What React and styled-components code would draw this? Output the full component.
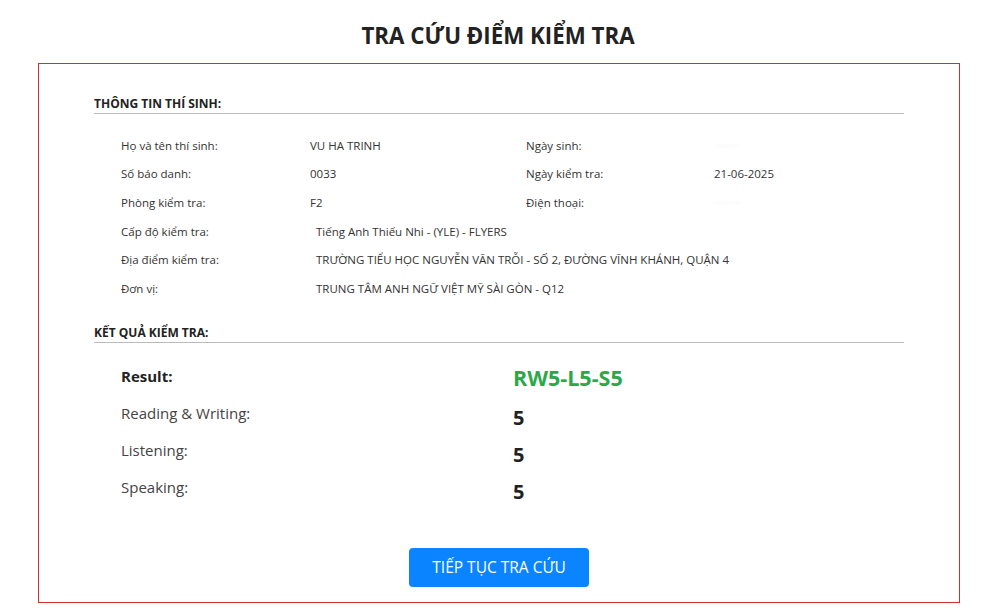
import styled, { createGlobalStyle } from "styled-components";

const GlobalStyle = createGlobalStyle`
  body {
    margin: 0;
    background: #fff;
    font-family: "Open Sans", "Noto Sans", sans-serif;
    color: #333;
  }
`;

const Page = styled.div`
  width: 982px;
  padding-top: 20px;
`;

const Title = styled.h1`
  margin: 0 0 12px;
  padding-left: 14px;
  text-align: center;
  font-size: 22.3px;
  font-weight: 700;
  color: #222;
  line-height: 31px;
`;

const Box = styled.div`
  margin: 0 22px 0 38px;
  border: 1px solid #d32f2f;
  padding: 31px 55px 15px 55px;
`;

const SectionHead = styled.div`
  font-size: 12px;
  font-weight: 700;
  color: #222;
  padding-bottom: 1px;
  border-bottom: 1px solid #bbb;
  margin-top: ${(p) => p.$top || 0}px;
`;

const InfoGrid = styled.div`
  display: grid;
  grid-template-columns: 189px 216px 188px 1fr;
  grid-auto-rows: 28.6px;
  padding: 17px 0 0 27px;
  font-size: 11.5px;
  color: #333;
  align-items: center;
`;

const Wide = styled.div`
  grid-column: 2 / span 3;
  padding-left: 6px;
`;

const Blur = styled.div`
  color: #eee;
  font-size: 10px;
  filter: blur(1px);
`;

const ResultGrid = styled.div`
  display: grid;
  grid-template-columns: 392px 1fr;
  grid-auto-rows: 37px;
  padding: 23px 0 0 27px;
`;

const RLabel = styled.div`
  font-size: 15px;
  font-weight: ${(p) => (p.$bold ? 700 : 400)};
  color: ${(p) => (p.$bold ? "#222" : "#444")};
`;

const RValue = styled.div`
  font-size: ${(p) => p.$size || 20}px;
  font-weight: 700;
  line-height: 27px;
  color: ${(p) => p.$color || "#222"};
  margin-top: ${(p) => p.$pt || 0}px;
`;

const ButtonRow = styled.div`
  display: flex;
  justify-content: center;
  padding-top: 34px;
`;

const Button = styled.button`
  width: 180px;
  height: 39px;
  border: none;
  border-radius: 4px;
  background: #0a84ff;
  color: #fff;
  font-family: inherit;
  font-size: 15.5px;
  cursor: pointer;
`;

const info = [
  ["Họ và tên thí sinh:", "VU HA TRINH", "Ngày sinh:", null],
  ["Số báo danh:", "0033", "Ngày kiểm tra:", "21-06-2025"],
  ["Phòng kiểm tra:", "F2", "Điện thoại:", null],
];

const wide = [
  ["Cấp độ kiểm tra:", "Tiếng Anh Thiếu Nhi - (YLE) - FLYERS"],
  ["Địa điểm kiểm tra:", "TRƯỜNG TIỂU HỌC NGUYỄN VĂN TRỖI - SỐ 2, ĐƯỜNG VĨNH KHÁNH, QUẬN 4"],
  ["Đơn vị:", "TRUNG TÂM ANH NGỮ VIỆT MỸ SÀI GÒN - Q12"],
];

const scores = [
  ["Reading & Writing:", "5"],
  ["Listening:", "5"],
  ["Speaking:", "5"],
];

export default function App() {
  return (
    <Page>
      <GlobalStyle />
      <Title>TRA CỨU ĐIỂM KIỂM TRA</Title>
      <Box>
        <SectionHead>THÔNG TIN THÍ SINH:</SectionHead>
        <InfoGrid>
          {info.map(([l1, v1, l2, v2]) => [
            <div key={l1}>{l1}</div>,
            <div key={l1 + "v"}>{v1}</div>,
            <div key={l2}>{l2}</div>,
            v2 ? <div key={l2 + "v"}>{v2}</div> : <Blur key={l2 + "v"}>··········</Blur>,
          ])}
          {wide.map(([l, v]) => [
            <div key={l}>{l}</div>,
            <Wide key={l + "v"}>{v}</Wide>,
          ])}
        </InfoGrid>
        <SectionHead $top={21}>KẾT QUẢ KIỂM TRA:</SectionHead>
        <ResultGrid>
          <RLabel $bold>Result:</RLabel>
          <RValue $color="#2aa84a" $size={21.5} $pt={-2}>RW5-L5-S5</RValue>
          {scores.map(([l, v]) => [
            <RLabel key={l}>{l}</RLabel>,
            <RValue key={l + "v"} $pt={1}>{v}</RValue>,
          ])}
        </ResultGrid>
        <ButtonRow>
          <Button>TIẾP TỤC TRA CỨU</Button>
        </ButtonRow>
      </Box>
    </Page>
  );
}
